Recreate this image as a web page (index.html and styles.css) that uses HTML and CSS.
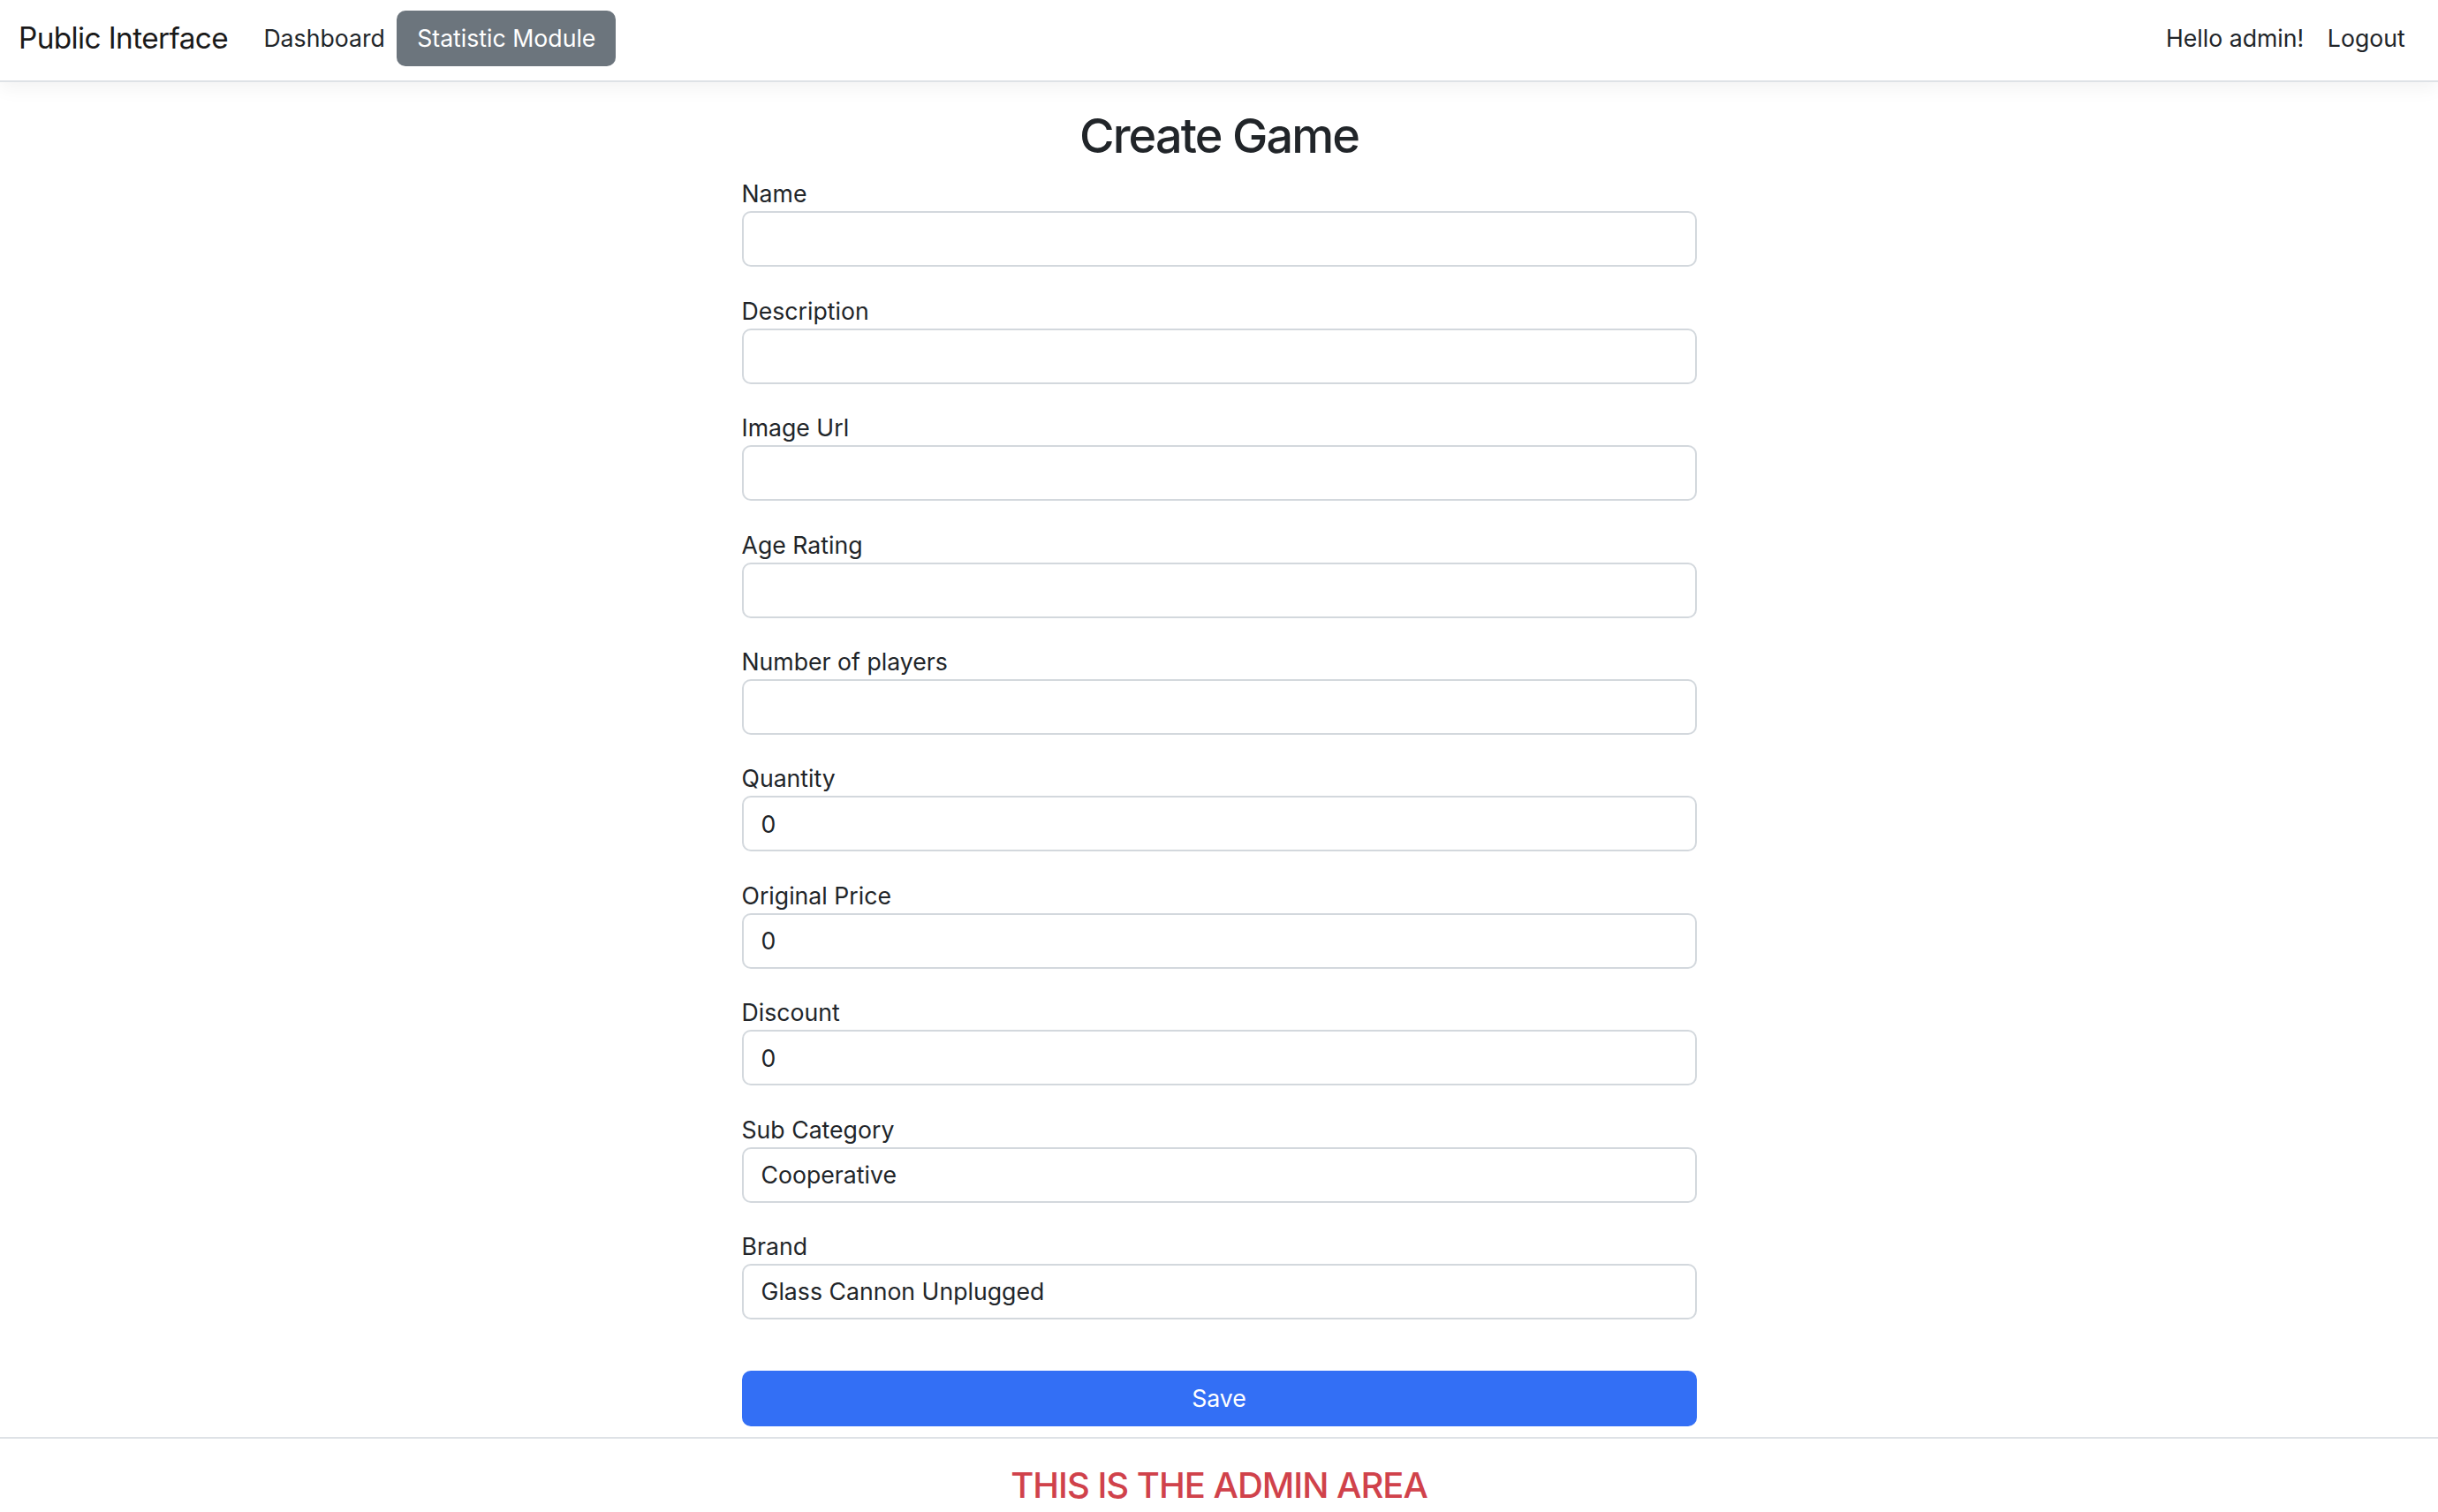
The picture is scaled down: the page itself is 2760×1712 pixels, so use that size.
FILE: index.html
```html
<!DOCTYPE html>
<html lang="en">
<head>
<meta charset="utf-8">
<title>Create Game</title>
<link rel="stylesheet" href="styles.css">
</head>
<body>
<header class="navbar">
  <a class="brand" href="#">Public Interface</a>
  <nav class="nav-left">
    <a class="nav-link" href="#">Dashboard</a>
    <a class="nav-btn" href="#">Statistic Module</a>
  </nav>
  <nav class="nav-right">
    <span class="nav-link">Hello admin!</span>
    <a class="nav-link" href="#">Logout</a>
  </nav>
</header>
<main class="container">
  <h1 class="title">Create Game</h1>
  <form class="form">
    <div class="group"><label class="label">Name</label><input class="control" type="text"></div>
    <div class="group"><label class="label">Description</label><input class="control" type="text"></div>
    <div class="group"><label class="label">Image Url</label><input class="control" type="text"></div>
    <div class="group"><label class="label">Age Rating</label><input class="control" type="text"></div>
    <div class="group"><label class="label">Number of players</label><input class="control" type="text"></div>
    <div class="group"><label class="label">Quantity</label><input class="control" type="text" value="0"></div>
    <div class="group"><label class="label">Original Price</label><input class="control" type="text" value="0"></div>
    <div class="group"><label class="label">Discount</label><input class="control" type="text" value="0"></div>
    <div class="group"><label class="label">Sub Category</label><input class="control" type="text" value="Cooperative"></div>
    <div class="group"><label class="label">Brand</label><input class="control" type="text" value="Glass Cannon Unplugged"></div>
    <button class="save" type="button">Save</button>
  </form>
</main>
<footer class="footer">
  <h4 class="admin">THIS IS THE ADMIN AREA</h4>
</footer>
</body>
</html>
```
FILE: styles.css
```css
* { box-sizing: border-box; }
html, body { margin: 0; padding: 0; }
body {
  font-family: Inter, "Noto Sans", "Liberation Sans", sans-serif;
  font-size: 26.67px;
  line-height: 40px;
  color: #212529;
  background: #fff;
  height: 1712px;
  overflow: hidden;
}
a { text-decoration: none; color: inherit; }

.navbar {
  display: flex;
  align-items: center;
  height: 93px;
  padding: 12px 24px 16px 21px;
  border-bottom: 2px solid #dee2e6;
  box-shadow: 0 7px 20px rgba(0, 0, 0, 0.05);
  position: relative;
}
.brand {
  font-size: 33.33px;
  line-height: 63px;
  letter-spacing: -0.6px;
  color: #1a1a1a;
  margin-right: 27px;
}
.nav-left, .nav-right {
  display: flex;
  align-items: center;
}
.nav-right { margin-left: auto; }
.nav-link {
  padding: 0 13.3px;
  line-height: 63px;
  color: #212529;
}
.nav-btn {
  display: block;
  height: 63px;
  line-height: 63px;
  padding: 0 23px;
  border-radius: 10px;
  background: #6c757d;
  color: #fff;
}

.container {
  width: 1081px;
  margin: 0 auto;
}
.title {
  margin: 27px 0 12.2px;
  font-size: 54px;
  line-height: 67.2px;
  letter-spacing: -1.9px;
  font-weight: 500;
  text-align: center;
}
.form { margin: 0; }
.group {
  display: flex;
  flex-direction: column;
  margin-bottom: 29.4px;
}
.label {
  display: block;
  line-height: 40px;
}
.control {
  display: block;
  width: 100%;
  height: 63px;
  padding: 0 20px;
  font-family: inherit;
  font-size: 26.67px;
  color: #212529;
  background: #fff;
  border: 2px solid #d3d8dd;
  border-radius: 10px;
  outline: none;
}
.save {
  display: block;
  width: 100%;
  height: 63px;
  margin-top: 58px;
  padding: 0;
  font-family: inherit;
  font-size: 26.67px;
  color: #fff;
  background: #336ff5;
  border: 0;
  border-radius: 10px;
}
.footer {
  margin-top: 12px;
  border-top: 2px solid #dee2e6;
  text-align: center;
}
.admin {
  margin: 29px 0 0;
  font-size: 40px;
  line-height: 48px;
  letter-spacing: -1px;
  font-weight: 500;
  color: #d0424b;
}
```
